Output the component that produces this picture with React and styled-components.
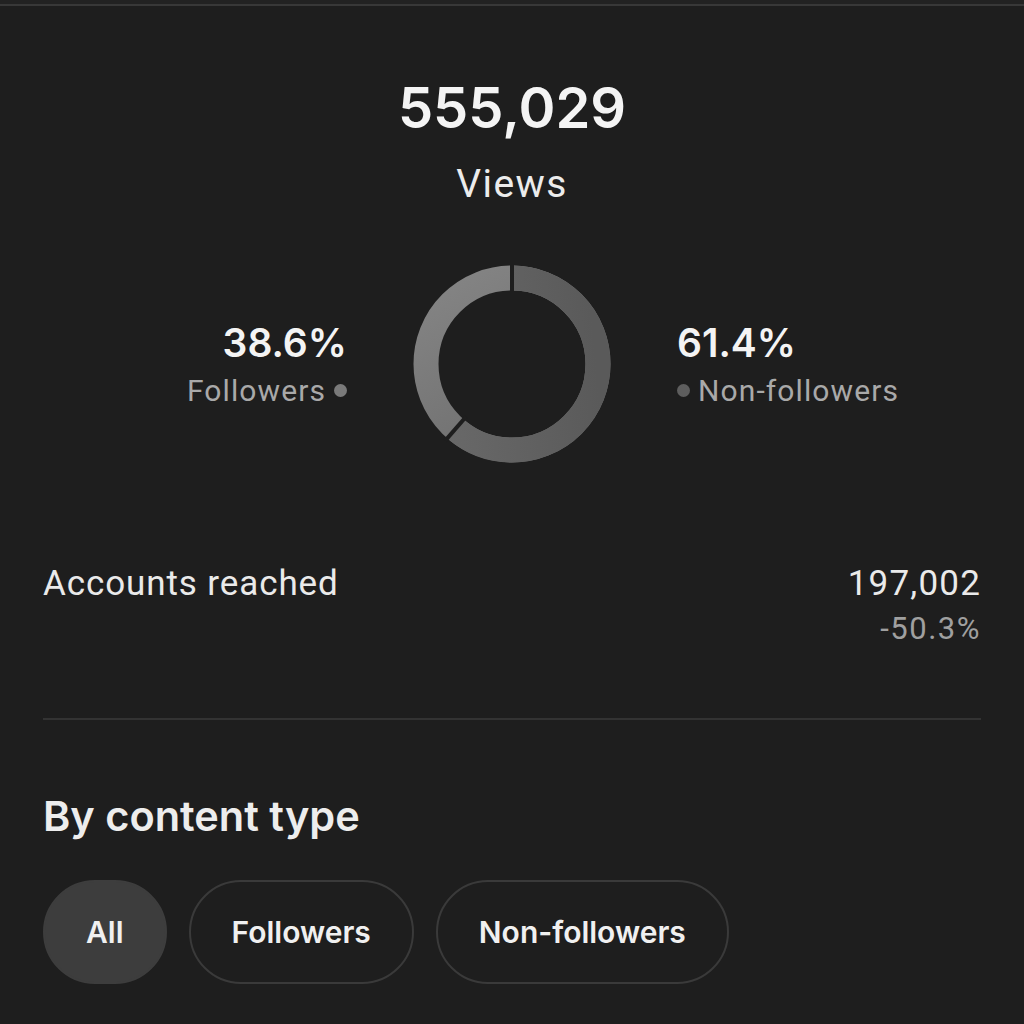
import React from "react";
import styled, { createGlobalStyle } from "styled-components";

const GlobalStyle = createGlobalStyle`
  html, body {
    margin: 0;
    padding: 0;
    background: #1e1e1e;
  }
  body {
    font-family: Roboto, "Liberation Sans", sans-serif;
    color: #f2f2f2;
  }
`;

const Screen = styled.div`
  width: 1024px;
  min-height: 1024px;
  background: #1e1e1e;
  overflow: hidden;
`;

const TopEdge = styled.div`
  height: 4px;
  border-bottom: 2px solid #383838;
  background: #222222;
`;

const Content = styled.div`
  padding: 74px 43px 0 43px;
  display: flex;
  flex-direction: column;
`;

const Hero = styled.div`
  display: flex;
  flex-direction: column;
  align-items: center;
`;

const BigNumber = styled.div`
  font-family: Inter, "Noto Sans", sans-serif;
  font-weight: 600;
  font-size: 56px;
  line-height: 1;
  color: #f4f4f4;
`;

const HeroLabel = styled.div`
  margin-top: 29px;
  font-size: 39px;
  line-height: 1;
  letter-spacing: 1.4px;
  color: #ececec;
`;

const Split = styled.div`
  margin-top: 60px;
  display: grid;
  grid-template-columns: 1fr auto 1fr;
  column-gap: 65px;
  align-items: center;
`;

const Side = styled.div`
  display: flex;
  flex-direction: column;
  align-items: ${(p) => (p.$right ? "flex-start" : "flex-end")};
`;

const Percent = styled.div`
  font-family: Inter, "Noto Sans", sans-serif;
  font-weight: 600;
  font-size: 39px;
  line-height: 1;
  color: #f4f4f4;
`;

const Legend = styled.div`
  margin-top: 14px;
  display: flex;
  align-items: center;
  gap: 8px;
  font-size: 30px;
  line-height: 1;
  letter-spacing: 1.1px;
  color: #a9a9a9;
`;

const Dot = styled.span`
  width: 13px;
  height: 13px;
  border-radius: 50%;
  background: ${(p) => p.$color};
`;

const Row = styled.div`
  margin-top: 102px;
  display: flex;
  justify-content: space-between;
  align-items: flex-start;
`;

const RowLabel = styled.div`
  font-size: 35px;
  line-height: 1;
  letter-spacing: 0.9px;
  color: #eaeaea;
`;

const RowValues = styled.div`
  display: flex;
  flex-direction: column;
  align-items: flex-end;
  gap: 12px;
`;

const RowValue = styled.div`
  font-size: 35px;
  line-height: 1;
  letter-spacing: 1.2px;
  color: #eaeaea;
`;

const RowDelta = styled.div`
  font-size: 31px;
  line-height: 1;
  letter-spacing: 1.5px;
  color: #a0a0a0;
`;

const Divider = styled.div`
  margin-top: 74px;
  height: 2px;
  background: #333333;
`;

const SectionTitle = styled.h2`
  margin: 76px 0 0 0;
  font-family: Inter, "Noto Sans", sans-serif;
  font-weight: 600;
  font-size: 41.5px;
  line-height: 1;
  color: #ededed;
`;

const Pills = styled.div`
  margin-top: 42px;
  display: flex;
  gap: 22px;
`;

const Pill = styled.button`
  height: 104px;
  padding: 0 41px;
  border-radius: 52px;
  border: 2px solid ${(p) => (p.$active ? "#3d3d3d" : "#3a3a3a")};
  background: ${(p) => (p.$active ? "#3d3d3d" : "transparent")};
  color: #f0f0f0;
  font-family: Inter, "Noto Sans", sans-serif;
  font-weight: 600;
  font-size: 30px;
  line-height: 1;
`;

function Donut({ share }) {
  const cx = 100;
  const cy = 100;
  const r = 86;
  const c = 2 * Math.PI * r;
  const first = c * share;
  const split = share * 360;
  const rad = ((split - 90) * Math.PI) / 180;
  return (
    <svg width="200" height="200" viewBox="0 0 200 200">
      <defs>
        <linearGradient id="gLight" x1="0" y1="0" x2="0.6" y2="1">
          <stop offset="0" stopColor="#858585" />
          <stop offset="1" stopColor="#6e6e6e" />
        </linearGradient>
        <linearGradient id="gDark" x1="0.3" y1="0" x2="0.4" y2="1">
          <stop offset="0" stopColor="#6a6a6a" />
          <stop offset="1" stopColor="#5a5a5a" />
        </linearGradient>
      </defs>
      <circle cx={cx} cy={cy} r={r} fill="none" stroke="url(#gLight)" strokeWidth="25" />
      <circle
        cx={cx}
        cy={cy}
        r={r}
        fill="none"
        stroke="url(#gDark)"
        strokeWidth="25"
        strokeDasharray={`${first} ${c}`}
        transform={`rotate(-90 ${cx} ${cy})`}
      />
      <line x1={cx} y1={cy - 70} x2={cx} y2={cy - 102} stroke="#1e1e1e" strokeWidth="4" />
      <line
        x1={cx + 70 * Math.cos(rad)}
        y1={cy + 70 * Math.sin(rad)}
        x2={cx + 102 * Math.cos(rad)}
        y2={cy + 102 * Math.sin(rad)}
        stroke="#1e1e1e"
        strokeWidth="4"
      />
    </svg>
  );
}

export default function App() {
  return (
    <Screen>
      <GlobalStyle />
      <TopEdge />
      <Content>
        <Hero>
          <BigNumber>555,029</BigNumber>
          <HeroLabel>Views</HeroLabel>
        </Hero>

        <Split>
          <Side>
            <Percent>38.6%</Percent>
            <Legend>
              Followers
              <Dot $color="#7a7a7a" />
            </Legend>
          </Side>
          <Donut share={0.614} />
          <Side $right>
            <Percent>61.4%</Percent>
            <Legend>
              <Dot $color="#5e5e5e" />
              Non-followers
            </Legend>
          </Side>
        </Split>

        <Row>
          <RowLabel>Accounts reached</RowLabel>
          <RowValues>
            <RowValue>197,002</RowValue>
            <RowDelta>-50.3%</RowDelta>
          </RowValues>
        </Row>

        <Divider />

        <SectionTitle>By content type</SectionTitle>

        <Pills>
          <Pill $active>All</Pill>
          <Pill>Followers</Pill>
          <Pill>Non-followers</Pill>
        </Pills>
      </Content>
    </Screen>
  );
}
